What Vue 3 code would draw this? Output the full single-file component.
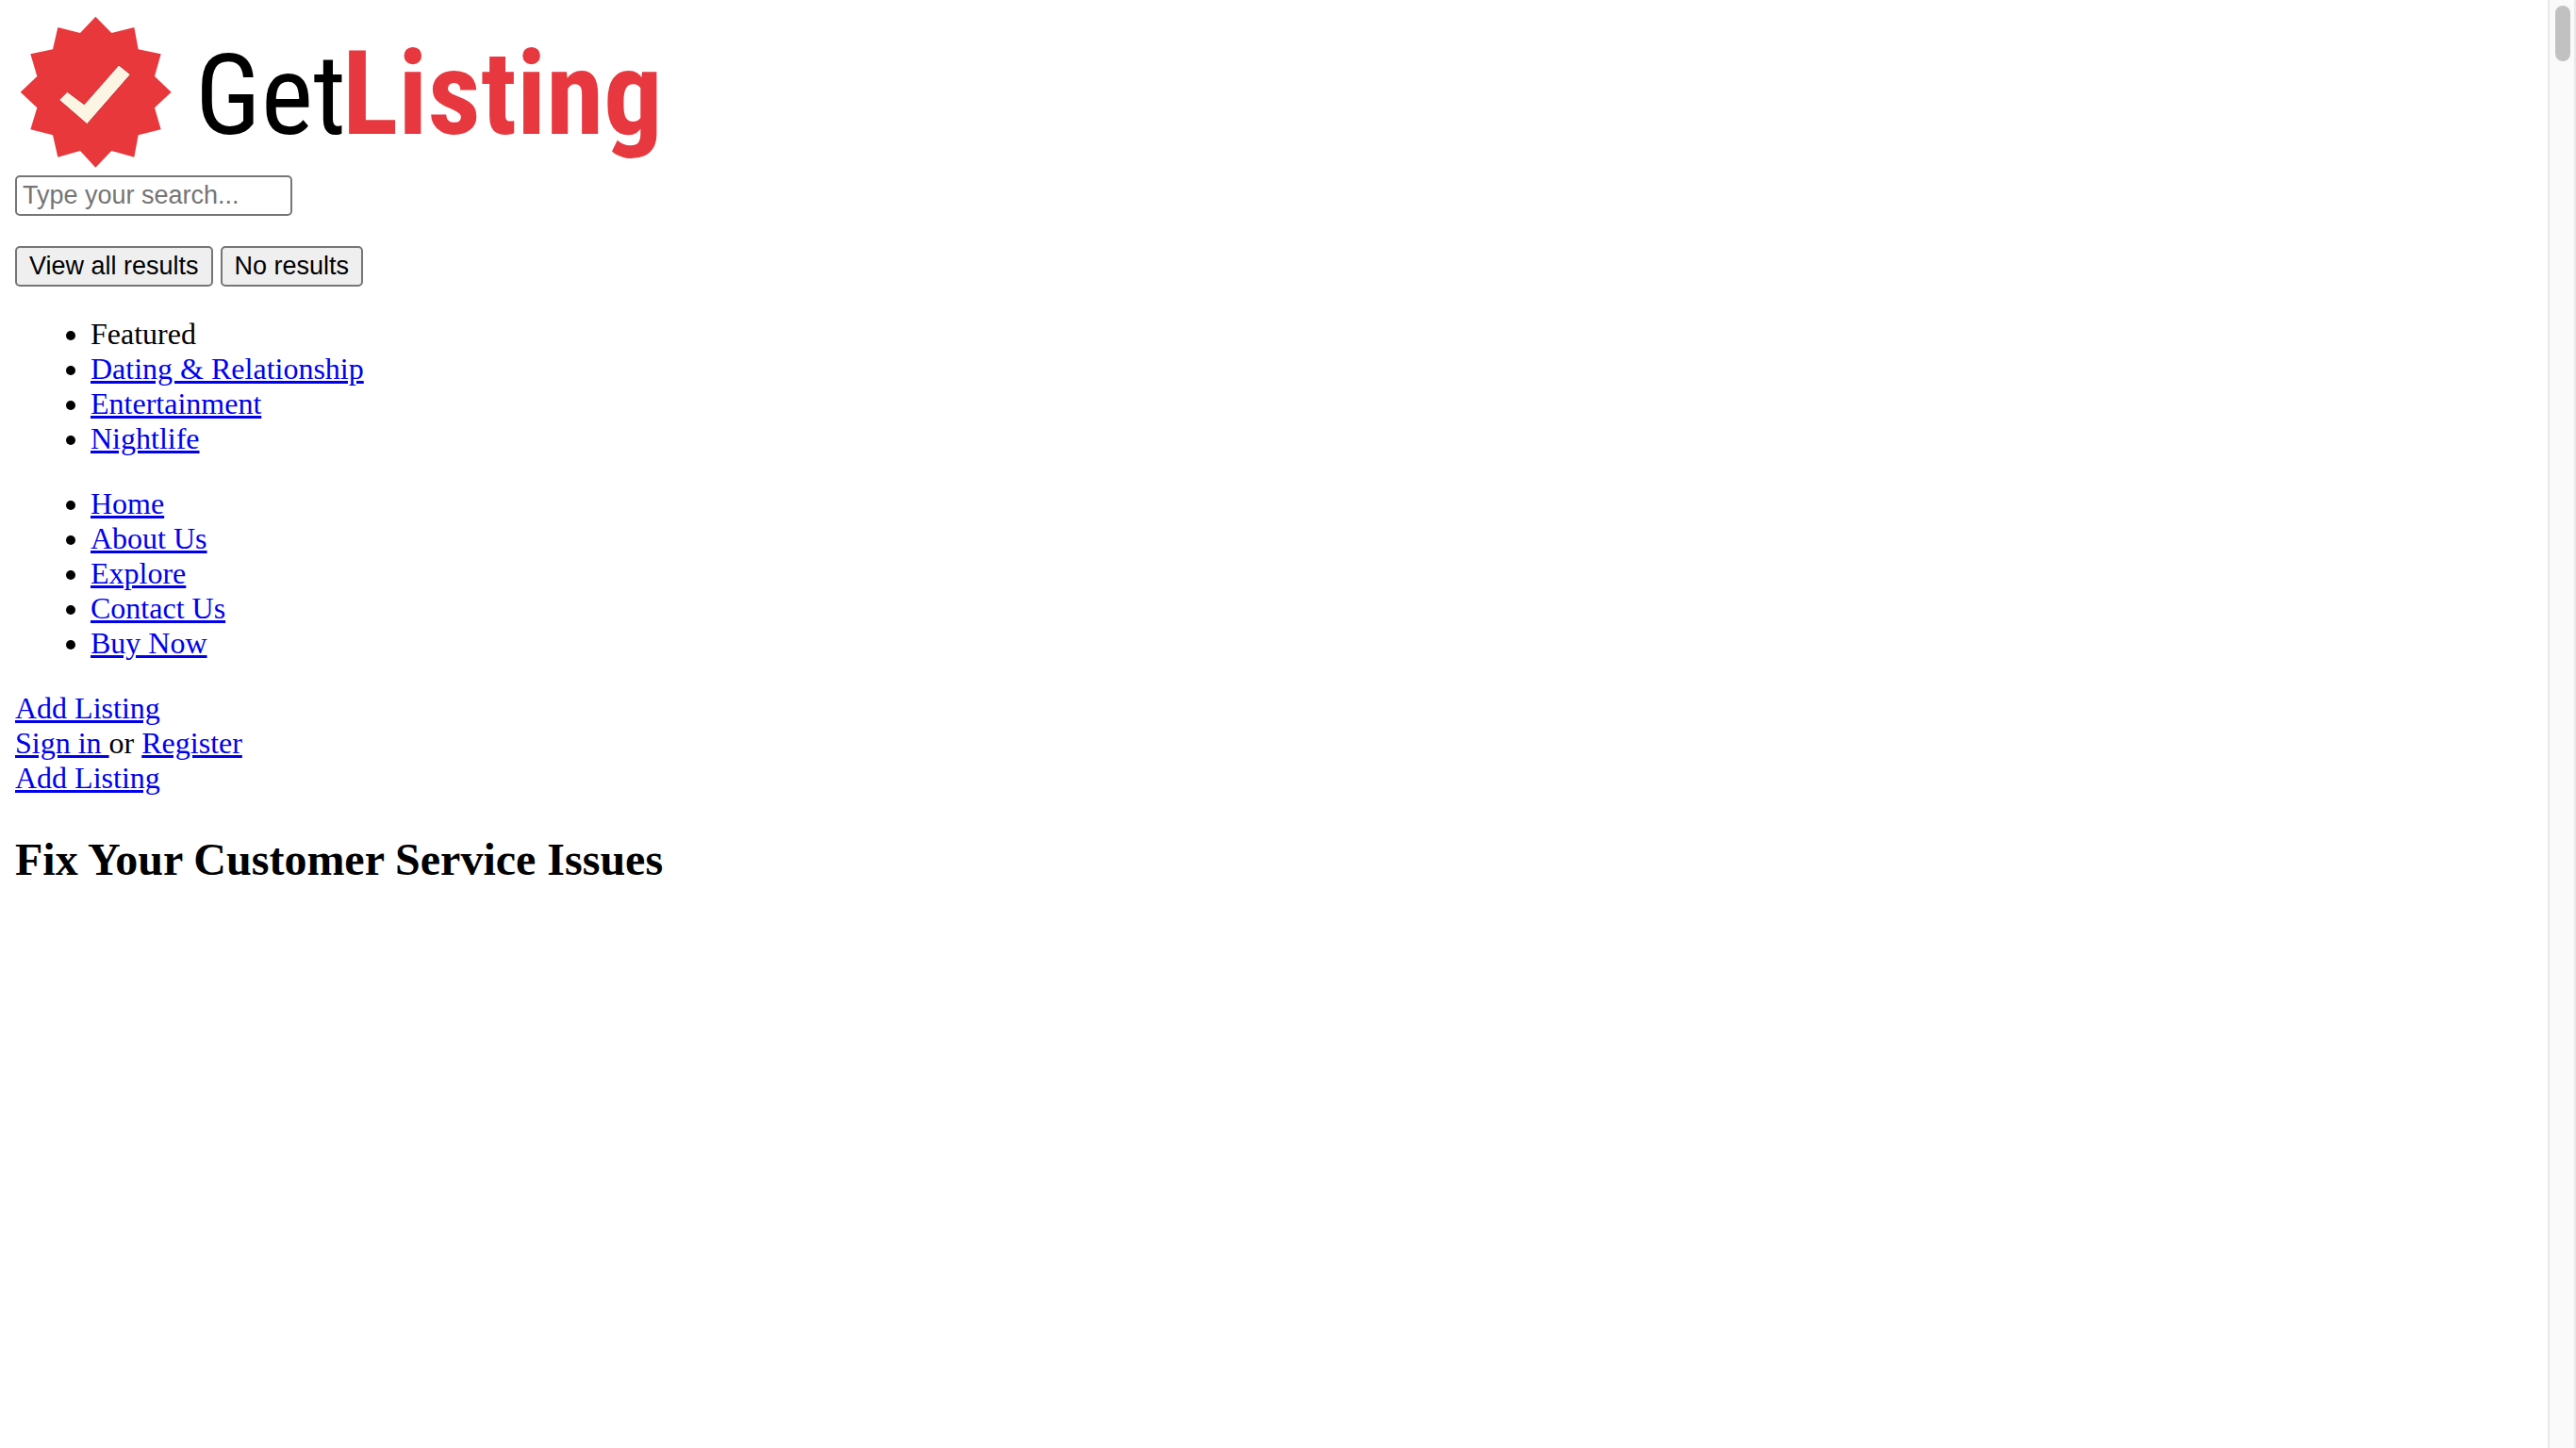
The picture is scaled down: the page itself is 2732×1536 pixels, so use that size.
<script setup>
const featured = ['Dating & Relationship', 'Entertainment', 'Nightlife']
const menu = ['Home', 'About Us', 'Explore', 'Contact Us', 'Buy Now']
</script>

<template>
  <div class="page">
    <main class="content">
      <a class="logo" href="#" aria-label="GetListing">
        <svg class="logo-art" viewBox="0 0 700 170">
          <svg width="700" height="170" viewBox="48 48 2100 510">
            <path
              fill="#e8383b"
              d="M304 53 355 105 427 87 440 157 512 172 492 243 545 293 492 343 512 412 440 430 427 500 355 480 304 533 255 480 184 500 168 430 97 412 118 343 65 293 118 243 97 172 168 157 184 87 255 105Z"
            />
            <path fill="#fdf5e4" stroke="#c92f3c" stroke-width="3" d="M188 318 214 292 268 332 378 207 415 237 277 395Z" />
          </svg>
          <text class="word" x="191" y="126">Get</text>
          <text class="word word-bold" x="347" y="126">Listing</text>
        </svg>
      </a>

      <input class="search" type="text" placeholder="Type your search..." aria-label="Search" />

      <div class="actions">
        <button type="button">View all results</button>
        <button type="button">No results</button>
      </div>

      <ul>
        <li>Featured</li>
        <li v-for="item in featured" :key="item"><a href="#">{{ item }}</a></li>
      </ul>

      <ul>
        <li v-for="item in menu" :key="item"><a href="#">{{ item }}</a></li>
      </ul>

      <div><a href="#">Add Listing</a></div>
      <div><a href="#">Sign in&nbsp;</a>or <a href="#">Register</a></div>
      <div><a href="#">Add Listing</a></div>

      <h2>Fix Your Customer Service Issues</h2>
    </main>
    <div class="track" aria-hidden="true"><div class="thumb"></div></div>
  </div>
</template>

<style>
body {
  margin: 0;
  background: #fff;
}
</style>

<style scoped>
.page {
  display: flex;
  min-height: 100vh;
  font-family: "Liberation Serif", "Times New Roman", serif;
  font-size: 32px;
  line-height: 37px;
  color: #000;
}
.content {
  flex: 1;
  padding: 16px;
}
.logo {
  display: block;
  width: 700px;
  height: 170px;
}
.logo-art {
  display: block;
  width: 100%;
  height: 100%;
}
.word {
  font-family: "Roboto Condensed", "Liberation Sans Narrow", sans-serif;
  font-size: 118px;
  font-weight: 400;
  fill: #000;
}
.word-bold {
  font-size: 124px;
  font-weight: 700;
  fill: #e8383f;
}
.search {
  display: block;
  box-sizing: border-box;
  width: 294px;
  height: 43px;
  padding: 2px 6px;
  border: 2px solid #767676;
  border-radius: 5px;
  background: #fff;
  font: 27px "Liberation Sans", Arial, sans-serif;
}
.search::placeholder {
  color: #757575;
}
.actions {
  display: flex;
  gap: 8px;
  margin: 32px 0;
}
button {
  height: 43px;
  padding: 0 13px;
  border: 2px solid #767676;
  border-radius: 5px;
  background: #efefef;
  color: #000;
  font: 27px "Liberation Sans", Arial, sans-serif;
}
ul {
  margin: 0 0 32px;
  padding-left: 80px;
}
a {
  color: #0000ee;
  text-decoration: underline;
  text-decoration-thickness: 3px;
}
h2 {
  margin: 40px 0;
  font-size: 48px;
  line-height: 55px;
  font-weight: 700;
}
.track {
  box-sizing: border-box;
  width: 30px;
  padding: 6px;
  border: solid #e8e8e8;
  border-width: 0 2px;
  background: #fafafa;
}
.thumb {
  width: 16px;
  height: 59px;
  border-radius: 8px;
  background: #c1c1c1;
}
</style>
